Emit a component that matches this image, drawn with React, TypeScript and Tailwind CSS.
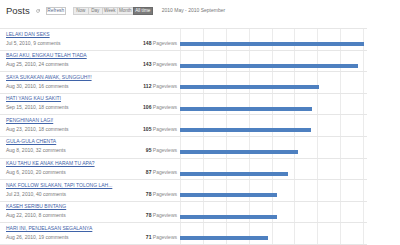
import { RotateCw } from 'lucide-react';

interface PostRow {
  title: string;
  meta: string;
  views: number;
}

const posts: PostRow[] = [
  { title: 'LELAKI DAN SEKS', meta: 'Jul 5, 2010, 9 comments', views: 148 },
  { title: 'BAGI AKU, ENGKAU TELAH TIADA', meta: 'Aug 25, 2010, 24 comments', views: 143 },
  { title: 'SAYA SUKAKAN AWAK, SUNGGUH!!!', meta: 'Aug 30, 2010, 16 comments', views: 112 },
  { title: 'HATI YANG KAU SAKITI', meta: 'Sep 15, 2010, 18 comments', views: 106 },
  { title: 'PENGHINAAN LAGI!', meta: 'Aug 23, 2010, 18 comments', views: 105 },
  { title: 'GULA-GULA CHENTA', meta: 'Aug 8, 2010, 32 comments', views: 95 },
  { title: 'KAU TAHU KE ANAK HARAM TU APA?', meta: 'Aug 6, 2010, 20 comments', views: 87 },
  { title: 'NAK FOLLOW SILAKAN, TAPI TOLONG LAH...', meta: 'Jul 23, 2010, 40 comments', views: 78 },
  { title: 'KASEH SERIBU BINTANG', meta: 'Aug 22, 2010, 8 comments', views: 78 },
  { title: 'HARI INI, PENJELASAN SEGALANYA', meta: 'Aug 26, 2010, 19 comments', views: 71 },
];

const ranges = [
  { label: 'Now', w: 'w-[16px]' },
  { label: 'Day', w: 'w-[15px]' },
  { label: 'Week', w: 'w-[16px]' },
  { label: 'Month', w: 'w-[17px]' },
];

export default function App() {
  const max = 148;

  return (
    <div className="w-[400px] h-[245px] bg-white overflow-hidden font-['Liberation_Sans',Arial,sans-serif] text-[5px] text-[#666]">
      {/* header */}
      <div className="flex items-center h-[22px] pl-[6px]">
        <h2 className="text-[9.5px] leading-none text-[#333]">Posts</h2>
        <RotateCw className="ml-[6px] w-[4px] h-[4px] text-[#888]" strokeWidth={3} />
        <button className="ml-[6px] w-[20px] h-[8px] border border-[#c8c8c8] text-[#5a6a8a] leading-[6px] text-[4.8px]">
          Refresh
        </button>
        <div className="ml-[7px] flex h-[8px]">
          {ranges.map((r) => (
            <button
              key={r.label}
              className={`${r.w} h-[8px] bg-[#ececec] border border-[#d2d2d2] -ml-px first:ml-0 text-[#777] text-[4.6px] leading-[6px]`}
            >
              {r.label}
            </button>
          ))}
          <button className="w-[20px] h-[8px] bg-[#7a7a7a] border border-[#6a6a6a] -ml-px text-white text-[4.6px] leading-[6px]">
            All time
          </button>
        </div>
        <span className="ml-[9px] text-[#777] text-[5px]">2010 May - 2010 September</span>
      </div>

      {/* table */}
      <div className="mt-[6px] w-[367px] border-t border-[#e6e6e6]">
        {posts.map((p) => (
          <div key={p.title} className="flex h-[21.6px] border-b border-[#e6e6e6]">
            <div className="w-[180px] pl-[6px] pr-[3px] pt-[0.5px]">
              <div className="h-[9px] leading-[9px]">
                <a href="#" className="text-[#3f63a8] underline">
                  {p.title}
                </a>
              </div>
              <div className="flex justify-between h-[9px] leading-[9px]">
                <span className="text-[#777]">{p.meta}</span>
                <span>
                  <b className="text-[#333]">{p.views}</b> <span className="text-[#888]">Pageviews</span>
                </span>
              </div>
            </div>
            <div className="flex-1 pt-[13px] bg-[image:repeating-linear-gradient(90deg,#ebebeb_0px,#ebebeb_1px,transparent_1px,transparent_22.9px)]">
              <div className="h-[4px] bg-[#4e80c0]" style={{ width: `${(p.views / max) * 184}px` }} />
            </div>
          </div>
        ))}
      </div>
    </div>
  );
}
